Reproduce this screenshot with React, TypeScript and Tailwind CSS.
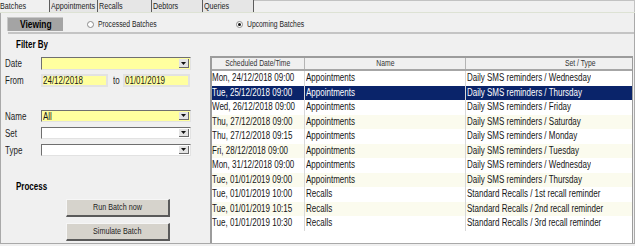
import React from 'react';

const rows = [
  { date: 'Mon, 24/12/2018 09:00', name: 'Appointments', set: 'Daily SMS reminders / Wednesday' },
  { date: 'Tue, 25/12/2018 09:00', name: 'Appointments', set: 'Daily SMS reminders / Thursday' },
  { date: 'Wed, 26/12/2018 09:00', name: 'Appointments', set: 'Daily SMS reminders / Friday' },
  { date: 'Thu, 27/12/2018 09:00', name: 'Appointments', set: 'Daily SMS reminders / Saturday' },
  { date: 'Thu, 27/12/2018 09:15', name: 'Appointments', set: 'Daily SMS reminders / Monday' },
  { date: 'Fri, 28/12/2018 09:00', name: 'Appointments', set: 'Daily SMS reminders / Tuesday' },
  { date: 'Mon, 31/12/2018 09:00', name: 'Appointments', set: 'Daily SMS reminders / Wednesday' },
  { date: 'Tue, 01/01/2019 09:00', name: 'Appointments', set: 'Daily SMS reminders / Thursday' },
  { date: 'Tue, 01/01/2019 10:00', name: 'Recalls', set: 'Standard Recalls / 1st recall reminder' },
  { date: 'Tue, 01/01/2019 10:15', name: 'Recalls', set: 'Standard Recalls / 2nd recall reminder' },
  { date: 'Tue, 01/01/2019 10:30', name: 'Recalls', set: 'Standard Recalls / 3rd recall reminder' },
];

const tabs = [
  { label: 'Appointments', w: 'w-[48px]' },
  { label: 'Recalls', w: 'w-[54px]' },
  { label: 'Debtors', w: 'w-[51px]' },
  { label: 'Queries', w: 'w-[52px] border-r' },
];

// the old WinForms screen is rendered in a squashed sans; scale glyphs horizontally
function T({ children, center }: { children: React.ReactNode; center?: boolean }) {
  return (
    <span className={`inline-block whitespace-nowrap scale-x-[0.8] ${center ? 'origin-center' : 'origin-left'}`}>
      {children}
    </span>
  );
}

function Combo({ value, yellow, h }: { value?: string; yellow?: boolean; h: string }) {
  return (
    <div
      className={`w-[150px] ${h} flex border-t border-l border-[#6f6f6f] border-b border-r border-b-[#e2e2e2] border-r-[#e2e2e2] ${
        yellow ? 'bg-[#ffff9f]' : 'bg-white'
      }`}
    >
      <span className="flex-1 pl-[1px] text-[10px] leading-[11px] text-[#1a1a1a]">
        <T>{value}</T>
      </span>
      <span className="w-[10px] my-[1px] mr-[1px] bg-[#e4e4e4] border-r border-b border-[#6a6a6a] flex items-center justify-center">
        <svg width="5" height="3" viewBox="0 0 5 3">
          <path d="M0 0h5L2.5 3z" fill="#111" />
        </svg>
      </span>
    </div>
  );
}

function DateBox({ value }: { value: string }) {
  return (
    <div className="w-[67px] h-[13px] border-2 border-[#e2e2e2] bg-[#ffff9f] text-[10px] leading-[9px] text-[#1a1a1a]">
      <T>{value}</T>
    </div>
  );
}

function Radio({ checked, label, className }: { checked?: boolean; label: string; className: string }) {
  return (
    <div className={`flex items-center ${className}`}>
      <span className="w-[7px] h-[7px] rounded-full border border-[#8a8a8a] bg-white flex items-center justify-center">
        {checked && <span className="w-[3px] h-[3px] rounded-full bg-[#111]" />}
      </span>
      <span className="ml-[4px] text-[8.5px] text-[#1e1e1e]">
        <T>{label}</T>
      </span>
    </div>
  );
}

function WinButton({ label }: { label: string }) {
  return (
    <div className="ml-[65px] w-[104px] h-[18px] bg-[#d6d3cc] border-t border-l border-[#f6f6f6] border-b-2 border-r-2 border-b-[#5a5a5a] border-r-[#5a5a5a] flex items-center justify-center text-[9px] text-[#1e1e1e]">
      <T center>{label}</T>
    </div>
  );
}

function Label({ text }: { text: string }) {
  return (
    <span className="w-[40px] pl-[4px] text-[10px]">
      <T>{text}</T>
    </span>
  );
}

export default function App() {
  return (
    <div className="w-[635px] h-[246px] bg-[#f0f0f0] flex flex-col font-['Liberation_Sans',Arial,sans-serif] text-[#1e1e1e]">
      {/* Tab strip */}
      <div className="h-[13px] flex border-b border-[#dde2d4]">
        <div className="w-[49px] text-[9px] leading-[12px] bg-[#f0f0f0]">
          <T>Batches</T>
        </div>
        {tabs.map((t) => (
          <div key={t.label} className={`${t.w} pl-[1px] text-[9px] leading-[12px] bg-[#e6e6e6] border-l border-[#5c5c5c]`}>
            <T>{t.label}</T>
          </div>
        ))}
        <div className="flex-1 border-t border-r border-[#c2c2c2]" />
      </div>

      {/* Tab page */}
      <div className="h-[231px] flex flex-col border-l border-r border-b border-[#a9a9a9]">
        <div className="h-[19px] pt-[4px] flex items-start">
          <div className="ml-[6px] w-[56px] h-[14px] bg-[#a4a4a4] border-t border-l border-[#c8c8c8] flex items-center justify-center text-[10.5px] font-bold text-black">
            <T center>Viewing</T>
          </div>
          <Radio label="Processed Batches" className="ml-[24px] h-[14px]" />
          <Radio checked label="Upcoming Batches" className="ml-[65px] h-[14px]" />
        </div>
        <div className="ml-[7px] h-[2px] bg-[#c4c4c4]" />

        <div className="flex-1 flex">
          {/* Filter panel */}
          <div className="w-[209px] shrink-0 flex flex-col">
            <div className="mt-[5px] pl-[15px] text-[10px] leading-[12px] font-bold text-black">
              <T>Filter By</T>
            </div>
            <div className="mt-[6px] h-[13px] flex items-center">
              <Label text="Date" />
              <Combo yellow h="h-[13px]" />
            </div>
            <div className="mt-[4px] h-[13px] flex items-center">
              <Label text="From" />
              <DateBox value="24/12/2018" />
              <span className="w-[15px] pl-[5px] text-[10px]">
                <T>to</T>
              </span>
              <DateBox value="01/01/2019" />
            </div>
            <div className="mt-[23px] h-[12px] flex items-center">
              <Label text="Name" />
              <Combo yellow value="All" h="h-[12px]" />
            </div>
            <div className="mt-[5px] h-[12px] flex items-center">
              <Label text="Set" />
              <Combo h="h-[12px]" />
            </div>
            <div className="mt-[5px] h-[12px] flex items-center">
              <Label text="Type" />
              <Combo h="h-[12px]" />
            </div>
            <div className="mt-[25px] pl-[15px] text-[10px] leading-[12px] font-bold text-black">
              <T>Process</T>
            </div>
            <div className="mt-[6px]">
              <WinButton label="Run Batch now" />
            </div>
            <div className="mt-[6px]">
              <WinButton label="Simulate Batch" />
            </div>
          </div>

          {/* Batch grid */}
          <div className="mt-[22px] w-[423px] shrink-0 flex flex-col overflow-hidden bg-white border-l-2 border-t-2 border-r border-[#9c9c9c]">
            <div className="h-[13px] shrink-0 flex bg-[#f0f0f0] border-b-2 border-[#a6a6a6] text-[8.5px] leading-[11px] text-[#333]">
              <div className="w-[93px] shrink-0 flex justify-center border-r border-[#b4b4b4]">
                <T center>Scheduled Date/Time</T>
              </div>
              <div className="w-[161px] shrink-0 flex justify-center border-r border-[#b4b4b4]">
                <T center>Name</T>
              </div>
              <div className="flex-1 min-w-0 pl-[99px]">
                <T>Set / Type</T>
              </div>
            </div>
            {rows.map((r, i) => {
              const sel = i === 1;
              const bg = sel ? 'bg-[#0a246a] text-white' : i % 2 ? 'bg-[#fbfbee] text-[#161616]' : 'bg-white text-[#161616]';
              return (
                <div key={i} className={`h-[14.5px] shrink-0 flex text-[10px] leading-[14px] ${bg}`}>
                  <div className="w-[93px] shrink-0 border-r border-[#d8d8d8]">
                    <T>{r.date}</T>
                  </div>
                  <div className="w-[161px] shrink-0 pl-[1px] border-r border-[#d8d8d8]">
                    <T>{r.name}</T>
                  </div>
                  <div className="flex-1 min-w-0 pl-[1px]">
                    <T>{r.set}</T>
                  </div>
                </div>
              );
            })}
          </div>
        </div>
      </div>
    </div>
  );
}
